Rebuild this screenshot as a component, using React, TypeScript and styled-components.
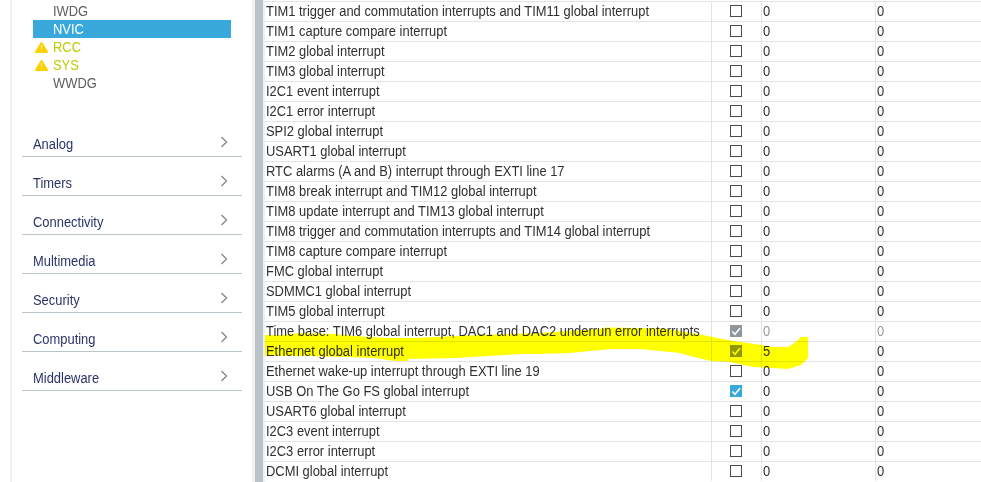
import React from "react";
import styled, { createGlobalStyle } from "styled-components";

const Global = createGlobalStyle`
  *{box-sizing:border-box}
  html,body{margin:0;padding:0;background:#fff;overflow:hidden}
  body{font-family:"Liberation Sans",Arial,sans-serif;font-size:14px;color:#303030}
`;
const Page = styled.div`display:flex;width:981px;height:482px;overflow:hidden;background:#fff;`;
const Label = styled.span`display:block;transform:scaleX(0.923);transform-origin:left center;white-space:nowrap;`;
const Sidebar = styled.aside`width:245px;margin-left:10px;border-left:2px solid #f0f0f0;border-right:3px solid #f0f1f2;padding:2px 10px 0;`;
const Peripherals = styled.div`margin:0 11px 26px;`;
const Peripheral = styled.div<{ $tone?: "selected" | "warning" }>`
  display:grid;grid-template-columns:20px 1fr;align-items:center;height:18px;line-height:18px;
  background:${p => (p.$tone === "selected" ? "#39a9dc" : "transparent")};
  color:${p => (p.$tone === "selected" ? "#fff" : p.$tone === "warning" ? "#bbcc00" : "#606060")};
  svg{display:block;margin-top:1px}
`;
const Category = styled.div`
  height:39px;border-bottom:1px solid #b8c4ca;display:flex;justify-content:space-between;
  padding:17px 14px 0 11px;line-height:18px;color:#2b3468;
  svg{margin-top:1px}
`;
const Divider = styled.div`width:10px;background:#b9c3c9;border-right:2px solid #eef0f1;`;
const Table = styled.main`position:relative;flex:1;padding-top:1px;`;
const Row = styled.div`
  display:grid;grid-template-columns:446px 50px 114px 1fr;height:20px;border-top:1px solid #e3e3e5;
`;
const Cell = styled.div<{ $divided?: boolean; $muted?: boolean; $center?: boolean }>`
  min-width:0;
  border-left:${p => (p.$divided ? "1px solid #e3e3e5" : "0")};
  padding:${p => (p.$center ? "0 1px 1px 0" : "0 0 0 1px")};
  display:flex;align-items:center;justify-content:${p => (p.$center ? "center" : "flex-start")};
  line-height:19px;color:${p => (p.$muted ? "#9a9a9e" : "inherit")};
`;
const Check = styled.span<{ $fill?: string }>`
  width:12px;height:12px;display:block;background:${p => p.$fill || "#fff"};
  border:${p => (p.$fill ? "0" : "1px solid #4b4b4d")};
  svg{display:block}
`;
const Marker = styled.svg`position:absolute;left:0;top:0;mix-blend-mode:multiply;pointer-events:none;`;

const Warning = () => (
  <svg width="15" height="13" viewBox="0 0 15 13">
    <path d="M8.5 2 14 11H3Z" fill="#ffd000" stroke="#ffd000" strokeWidth="2" strokeLinejoin="round" />
    <path d="M8.5 4v4M8.5 9.5v1" stroke="#fff1a0" />
  </svg>
);
const Chevron = () => (
  <svg width="8" height="12" viewBox="0 0 8 12">
    <path d="m1.5 1 5 5-5 5" fill="none" stroke="#858585" strokeWidth="1.3" />
  </svg>
);

const peripherals: { name: string; tone?: "selected" | "warning" }[] = [
  { name: "IWDG" }, { name: "NVIC", tone: "selected" }, { name: "RCC", tone: "warning" },
  { name: "SYS", tone: "warning" }, { name: "WWDG" },
];
const categories = ["Analog", "Timers", "Connectivity", "Multimedia", "Security", "Computing", "Middleware"];

type Interrupt = { name: string; fill?: string; priority?: string; muted?: boolean };
const interrupts: Interrupt[] = [
  { name: "TIM1 trigger and commutation interrupts and TIM11 global interrupt" },
  { name: "TIM1 capture compare interrupt" },
  { name: "TIM2 global interrupt" },
  { name: "TIM3 global interrupt" },
  { name: "I2C1 event interrupt" },
  { name: "I2C1 error interrupt" },
  { name: "SPI2 global interrupt" },
  { name: "USART1 global interrupt" },
  { name: "RTC alarms (A and B) interrupt through EXTI line 17" },
  { name: "TIM8 break interrupt and TIM12 global interrupt" },
  { name: "TIM8 update interrupt and TIM13 global interrupt" },
  { name: "TIM8 trigger and commutation interrupts and TIM14 global interrupt" },
  { name: "TIM8 capture compare interrupt" },
  { name: "FMC global interrupt" },
  { name: "SDMMC1 global interrupt" },
  { name: "TIM5 global interrupt" },
  { name: "Time base: TIM6 global interrupt, DAC1 and DAC2 underrun error interrupts", fill: "#90979c", muted: true },
  { name: "Ethernet global interrupt", fill: "#90979c", priority: "5" },
  { name: "Ethernet wake-up interrupt through EXTI line 19" },
  { name: "USB On The Go FS global interrupt", fill: "#39a9dc" },
  { name: "USART6 global interrupt" },
  { name: "I2C3 event interrupt" },
  { name: "I2C3 error interrupt" },
  { name: "DCMI global interrupt" },
];

export default function App() {
  return (
    <Page>
      <Global />
      <Sidebar>
        <Peripherals>
          {peripherals.map(p => (
            <Peripheral key={p.name} $tone={p.tone}>
              <span>{p.tone === "warning" && <Warning />}</span>
              <Label>{p.name}</Label>
            </Peripheral>
          ))}
        </Peripherals>
        {categories.map(c => <Category key={c}><Label>{c}</Label><Chevron /></Category>)}
      </Sidebar>
      <Divider />
      <Table>
        {interrupts.map(r => (
          <Row key={r.name}>
            <Cell><Label>{r.name}</Label></Cell>
            <Cell $divided $center>
              <Check $fill={r.fill}>
                {r.fill && <svg width="12" height="12"><path d="m2.3 6.5 2.700 2.700 5-6" fill="none" stroke="#fff" strokeWidth="1.6" /></svg>}
              </Check>
            </Cell>
            <Cell $divided $muted={r.muted}><Label>{r.priority || "0"}</Label></Cell>
            <Cell $divided $muted={r.muted}><Label>0</Label></Cell>
          </Row>
        ))}
        <Marker width="716" height="482" viewBox="265 0 716 482">
          <path fill="#ff0" d="M265 335 282 335 300 333 335 334 355 336 387 338 415 338 455 336 505 334 540 333 560 331.500 600 329 606 327.500 662 328.500 698 334 730 340.500 755 344 774 347 788 347 797 341 801 337H808V358L801 365 788 369 773 368 753 367 730 362 711 361 690 356 680 353 650 350 640 349H612L590 351 570 353 540 354H521L488 356 455 358 408 359V361H395L375 358 345 357 305 356H265Z" />
        </Marker>
      </Table>
    </Page>
  );
}
